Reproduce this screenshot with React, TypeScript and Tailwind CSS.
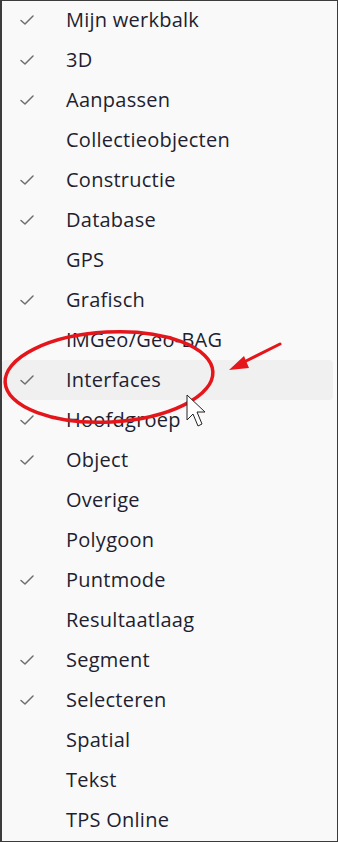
import React from "react";

const items: { label: string; checked: boolean }[] = [
  { label: "Mijn werkbalk", checked: true },
  { label: "3D", checked: true },
  { label: "Aanpassen", checked: true },
  { label: "Collectieobjecten", checked: false },
  { label: "Constructie", checked: true },
  { label: "Database", checked: true },
  { label: "GPS", checked: false },
  { label: "Grafisch", checked: true },
  { label: "IMGeo/Geo-BAG", checked: false },
  { label: "Interfaces", checked: true },
  { label: "Hoofdgroep", checked: true },
  { label: "Object", checked: true },
  { label: "Overige", checked: false },
  { label: "Polygoon", checked: false },
  { label: "Puntmode", checked: true },
  { label: "Resultaatlaag", checked: false },
  { label: "Segment", checked: true },
  { label: "Selecteren", checked: true },
  { label: "Spatial", checked: false },
  { label: "Tekst", checked: false },
  { label: "TPS Online", checked: false },
];

function Check() {
  return (
    <svg width="16" height="12" viewBox="0 0 16 12" fill="none">
      <path d="M2 6.5 L6 10 L14 2" stroke="#6e6e6e" strokeWidth="1.5" strokeLinecap="round" strokeLinejoin="round" />
    </svg>
  );
}

export default function App() {
  return (
    <div className="relative w-[338px] h-[842px] overflow-hidden bg-[#f9f9f9] border-t border-r border-b border-l-2 border-[#3c3c3c] font-['Open_Sans',sans-serif]">
      <ul className="flex flex-col pr-[4px] -mt-[1px]">
        {items.map((it) => (
          <li
            key={it.label}
            className={
              "h-[40px] flex items-center rounded-[4px] " +
              (it.label === "Interfaces" ? "bg-[#f0f0f0]" : "")
            }
          >
            <span className="w-[64px] pl-[17px] flex items-center">{it.checked && <Check />}</span>
            <span className="text-[20px] tracking-[0.25px] font-medium text-[#221e30] leading-none">{it.label}</span>
          </li>
        ))}
      </ul>

      {/* annotation overlay */}
      <svg className="absolute left-0 top-0 pointer-events-none" width="338" height="842" viewBox="0 0 338 842">
        <ellipse cx="107" cy="376" rx="104" ry="45" transform="rotate(-3 107 376)" fill="none" stroke="#e5161b" strokeWidth="3.5" />
        <line x1="278" y1="343" x2="240" y2="362" stroke="#e5161b" strokeWidth="3" strokeLinecap="round" />
        <polygon points="227,369 242,355 247,367" fill="#e5161b" />
        <path
          d="M185 394 L185 419 L191 413 L196 425 L200 423 L195 411 L203 411 Z"
          fill="#ffffff"
          stroke="#222"
          strokeWidth="1"
          strokeLinejoin="round"
        />
      </svg>
    </div>
  );
}
